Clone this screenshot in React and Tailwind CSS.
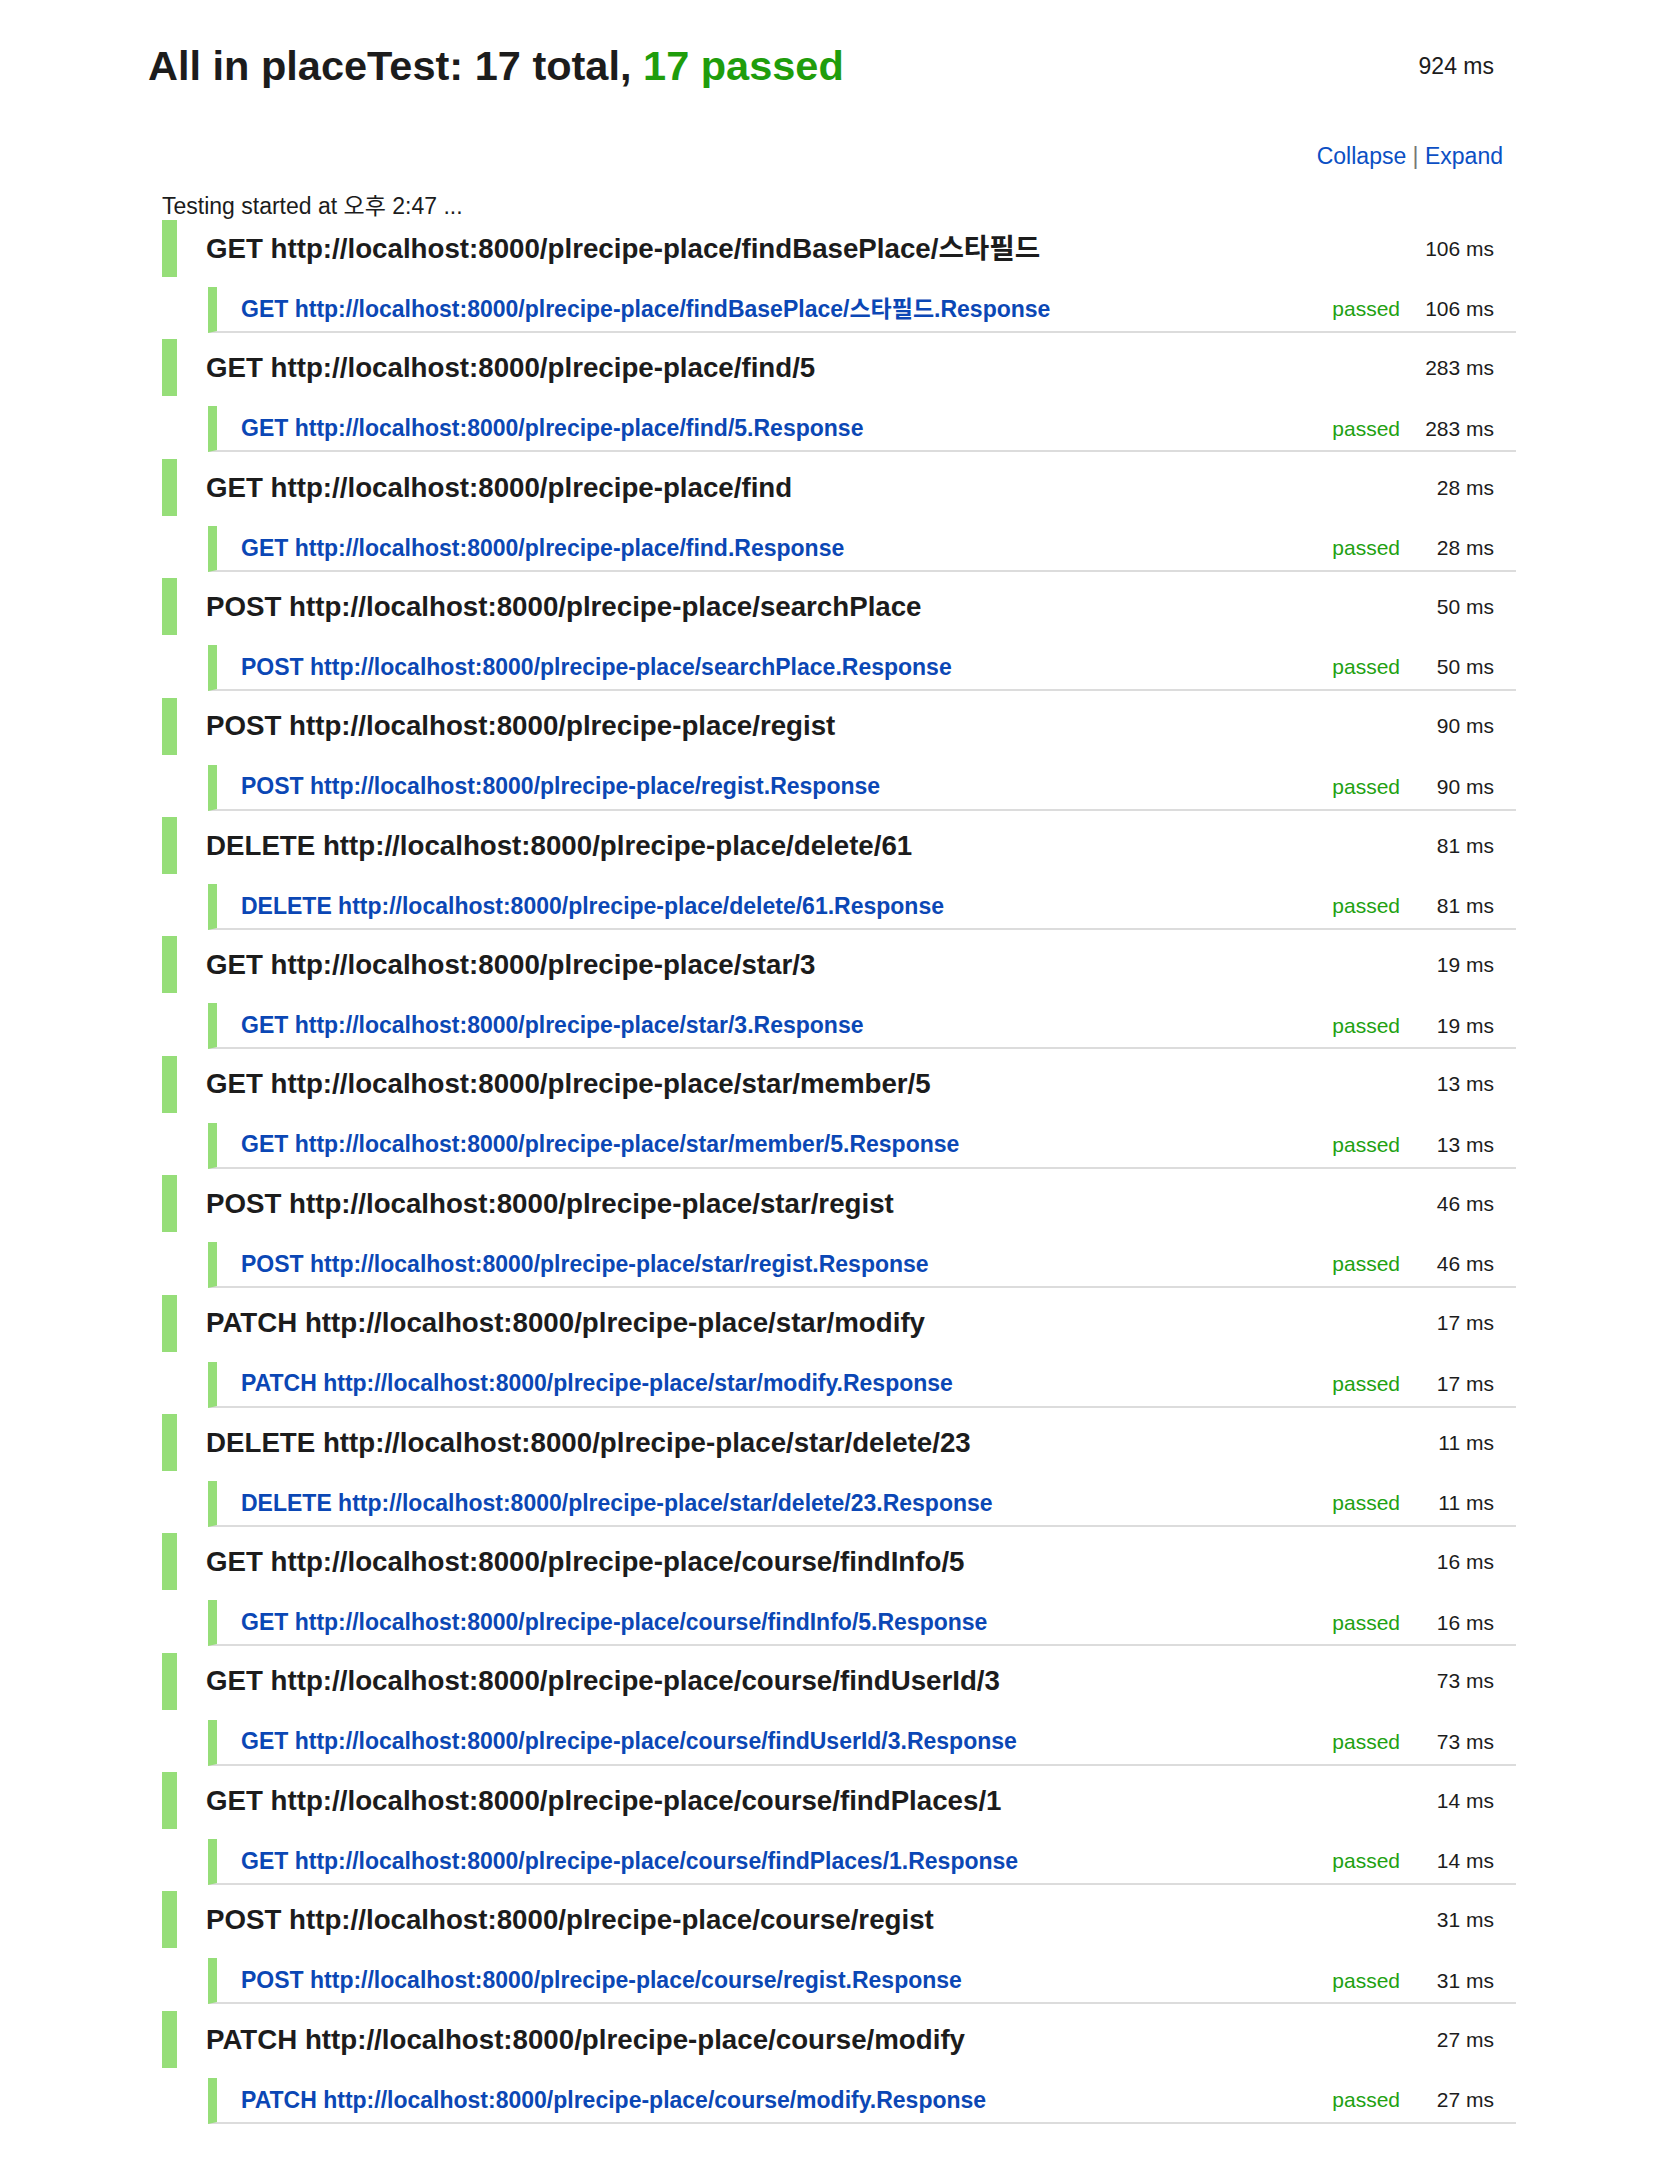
const BASE = "http://localhost:8000/plrecipe-place/";

const tests = [
  { method: "GET", path: "findBasePlace/스타필드", ms: 106 },
  { method: "GET", path: "find/5", ms: 283 },
  { method: "GET", path: "find", ms: 28 },
  { method: "POST", path: "searchPlace", ms: 50 },
  { method: "POST", path: "regist", ms: 90 },
  { method: "DELETE", path: "delete/61", ms: 81 },
  { method: "GET", path: "star/3", ms: 19 },
  { method: "GET", path: "star/member/5", ms: 13 },
  { method: "POST", path: "star/regist", ms: 46 },
  { method: "PATCH", path: "star/modify", ms: 17 },
  { method: "DELETE", path: "star/delete/23", ms: 11 },
  { method: "GET", path: "course/findInfo/5", ms: 16 },
  { method: "GET", path: "course/findUserId/3", ms: 73 },
  { method: "GET", path: "course/findPlaces/1", ms: 14 },
  { method: "POST", path: "course/regist", ms: 31 },
  { method: "PATCH", path: "course/modify", ms: 27 },
];

const Suite = ({ item }) => {
  const url = `${item.method} ${BASE}${item.path}`;
  return (
    <div className="mb-[6.4px]">
      <div className="flex items-center justify-between h-[57px] border-l-[15px] border-[#96de79] pl-[29px] pr-[22px]">
        <span className="text-[27.7px] font-bold text-[#1c1c1c] whitespace-nowrap">
          {url}
        </span>
        <span className="w-[90px] text-right text-[21px] text-[#1c1c1c]">
          {item.ms} ms
        </span>
      </div>
      <div className="ml-[46px] mt-[10px] flex items-center h-[46px] border-l-[9px] border-l-[#96de79] border-b-2 border-b-[#dcdcdc] pl-[24px] pr-[22px]">
        <span className="flex-1 text-[23px] font-bold text-[#0b47b5] whitespace-nowrap">
          {url}.Response
        </span>
        <span className="text-[21px] text-[#22a112]">passed</span>
        <span className="w-[94px] text-right text-[21px] text-[#1c1c1c]">
          {item.ms} ms
        </span>
      </div>
    </div>
  );
};

export default function App() {
  return (
    <div className="w-[1653px] min-h-[2172px] bg-white font-['Liberation_Sans','Noto_Sans_CJK_KR',sans-serif]">
      <div className="ml-[148px] w-[1368px] pt-[42px]">
        <div className="flex items-center justify-between h-[48px] pr-[22px]">
          <h1 className="text-[41.5px] font-bold text-[#1c1c1c]">
            All in placeTest: 17 total,{" "}
            <span className="text-[#1f9d0c]">17 passed</span>
          </h1>
          <span className="text-[23px] text-[#1c1c1c]">924 ms</span>
        </div>
        <div className="mt-[53px] h-[26px] leading-[26px] text-right pr-[13px] text-[23px]">
          <a className="text-[#0b4fc4]">Collapse</a>
          <span className="text-[#777]"> | </span>
          <a className="text-[#0b4fc4]">Expand</a>
        </div>
        <div className="ml-[14px] mt-[24px]">
          <div className="h-[26px] leading-[26px] text-[23px] text-[#1c1c1c]">
            Testing started at 오후 2:47 ...
          </div>
          <div className="mt-[1px]">
            {tests.map((t) => (
              <Suite key={t.path} item={t} />
            ))}
          </div>
        </div>
      </div>
    </div>
  );
}
